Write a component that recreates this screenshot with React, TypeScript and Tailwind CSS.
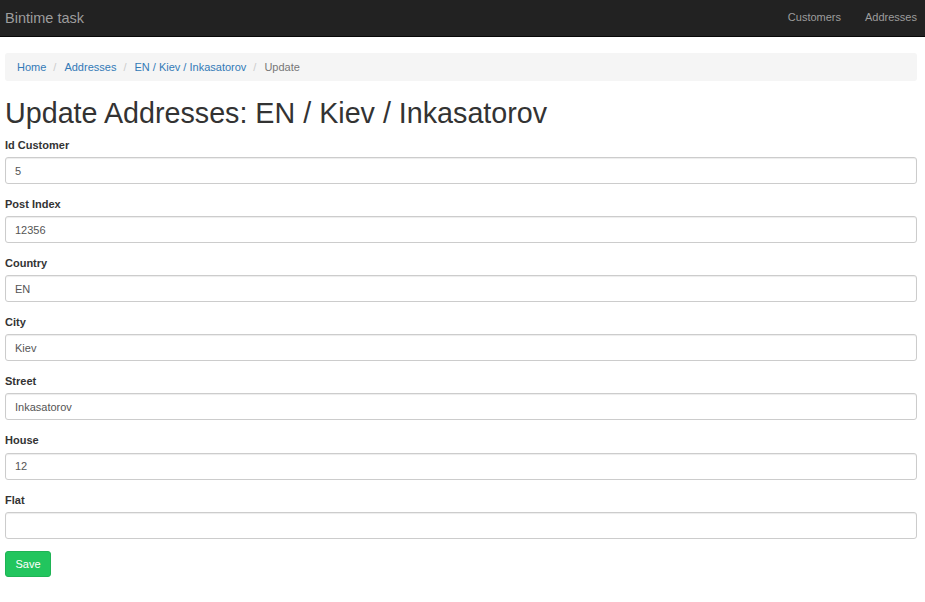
const FIELDS: { label: string; value: string }[] = [
  { label: 'Id Customer', value: '5' },
  { label: 'Post Index', value: '12356' },
  { label: 'Country', value: 'EN' },
  { label: 'City', value: 'Kiev' },
  { label: 'Street', value: 'Inkasatorov' },
  { label: 'House', value: '12' },
  { label: 'Flat', value: '' },
]

const CRUMBS = ['Home', 'Addresses', 'EN / Kiev / Inkasatorov']

function Navbar() {
  return (
    <nav className="h-[37px] bg-[#222] border-b border-[#080808] flex items-center pl-[5px] pr-[8px]">
      <span className="text-[14.5px] text-[#9d9d9d] leading-none">Bintime task</span>
      <div className="ml-auto flex items-center text-[11px] text-[#9d9d9d] -mt-[2px]">
        <span className="px-[12px]">Customers</span>
        <span className="pl-[12px]">Addresses</span>
      </div>
    </nav>
  )
}

function Breadcrumb() {
  return (
    <ol className="h-[28px] mt-[16px] bg-[#f5f5f5] rounded-[3px] flex items-center px-[12px] text-[11px]">
      {CRUMBS.map((c) => (
        <li key={c} className="flex items-center">
          <span className="text-[#337ab7]">{c}</span>
          <span className="text-[#ccc] ml-[7px] mr-[8px]">/</span>
        </li>
      ))}
      <li className="text-[#777]">Update</li>
    </ol>
  )
}

export default function App() {
  return (
    <div className="min-h-[602px] bg-white text-[#333]" style={{ fontFamily: '"Liberation Sans", Arial, sans-serif' }}>
      <Navbar />
      <div className="pl-[5px] pr-[8px]">
        <Breadcrumb />
        <h1 className="mt-[16px] mb-[8px] text-[28.7px] leading-[32px] text-[#333]">
          Update Addresses: EN / Kiev / Inkasatorov
        </h1>
        <form>
          {FIELDS.map((f) => (
            <div key={f.label} className="mb-[12px]">
              <label className="block text-[11px] font-bold leading-[16.1px] mb-[4px]">{f.label}</label>
              <input
                readOnly
                value={f.value}
                className="block w-full h-[27px] border border-[#ccc] rounded-[3px] px-[9px] text-[11px] text-[#555] shadow-[inset_0_1px_1px_rgba(0,0,0,0.075)] outline-none"
              />
            </div>
          ))}
          <button
            type="button"
            className="h-[26px] px-[9.5px] bg-[#22c55e] border border-[#1fb355] rounded-[3px] text-white text-[11px]"
          >
            Save
          </button>
        </form>
      </div>
    </div>
  )
}
